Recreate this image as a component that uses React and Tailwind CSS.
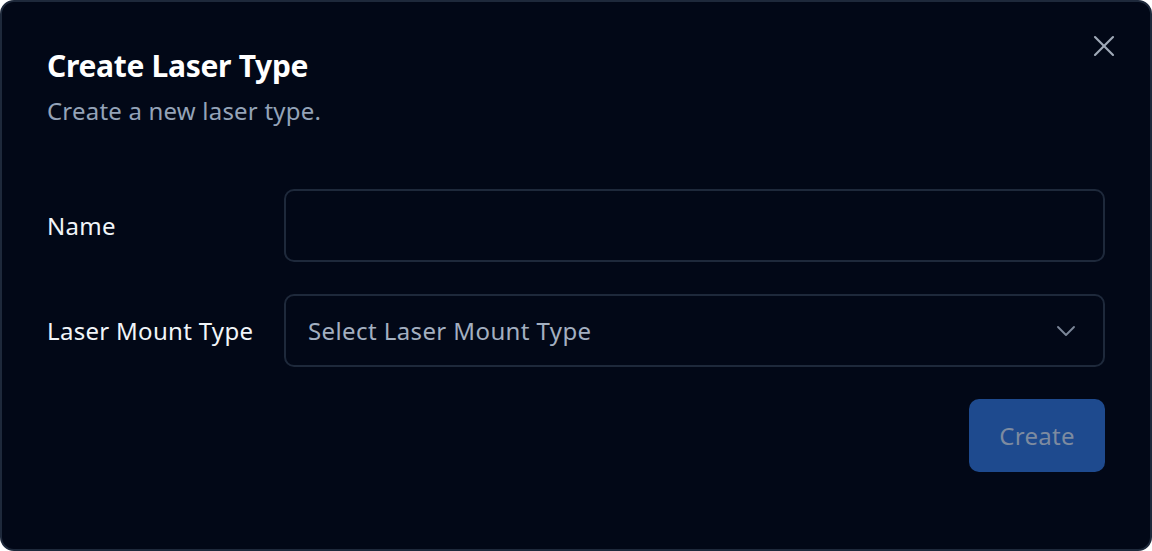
import React from "react";
import { X, ChevronDown } from "lucide-react";

const App = () => {
  return (
    <div
      className="w-[1152px] h-[551px] bg-white"
      style={{ fontFamily: '"Noto Sans", sans-serif' }}
    >
      <div className="relative w-full h-full bg-[#020817] border-2 border-[#1e293b] rounded-[14px] px-[45px] pt-[44px]">
        {/* Close */}
        <button className="absolute top-[26px] right-[28px] text-[#a0aab8]">
          <X className="w-[36px] h-[36px]" strokeWidth={1.4} />
        </button>

        {/* Header */}
        <div className="flex flex-col gap-[9px]">
          <h2 className="text-[30px] leading-[40px] font-bold text-white tracking-[-0.3px]">
            Create Laser Type
          </h2>
          <p className="text-[24px] leading-[32px] text-[#94a3b8] tracking-[0.2px]">
            Create a new laser type.
          </p>
        </div>

        {/* Form */}
        <div className="mt-[62px] flex flex-col gap-[32px]">
          <div className="flex items-center">
            <label className="w-[237px] text-[24px] text-[#f1f5f9] tracking-[0.3px]">
              Name
            </label>
            <input className="flex-1 h-[73px] rounded-[10px] border-2 border-[#1e293b] bg-transparent px-[22px] text-[24px] text-white outline-none" />
          </div>
          <div className="flex items-center">
            <label className="w-[237px] text-[24px] text-[#f1f5f9] tracking-[0.3px]">
              Laser Mount Type
            </label>
            <div className="flex-1 h-[73px] rounded-[10px] border-2 border-[#1e293b] pl-[22px] pr-[21px] flex items-center justify-between">
              <span className="text-[24px] text-[#a3afc0] tracking-[0.4px]">
                Select Laser Mount Type
              </span>
              <ChevronDown className="w-[32px] h-[32px] text-[#7c8799]" strokeWidth={1.4} />
            </div>
          </div>
          <div className="flex justify-end">
            <button className="w-[136px] h-[73px] rounded-[10px] bg-[#1e4a8e] text-[24px] text-[#7d8ba0] tracking-[0.3px]">
              Create
            </button>
          </div>
        </div>
      </div>
    </div>
  );
};

export default App;
